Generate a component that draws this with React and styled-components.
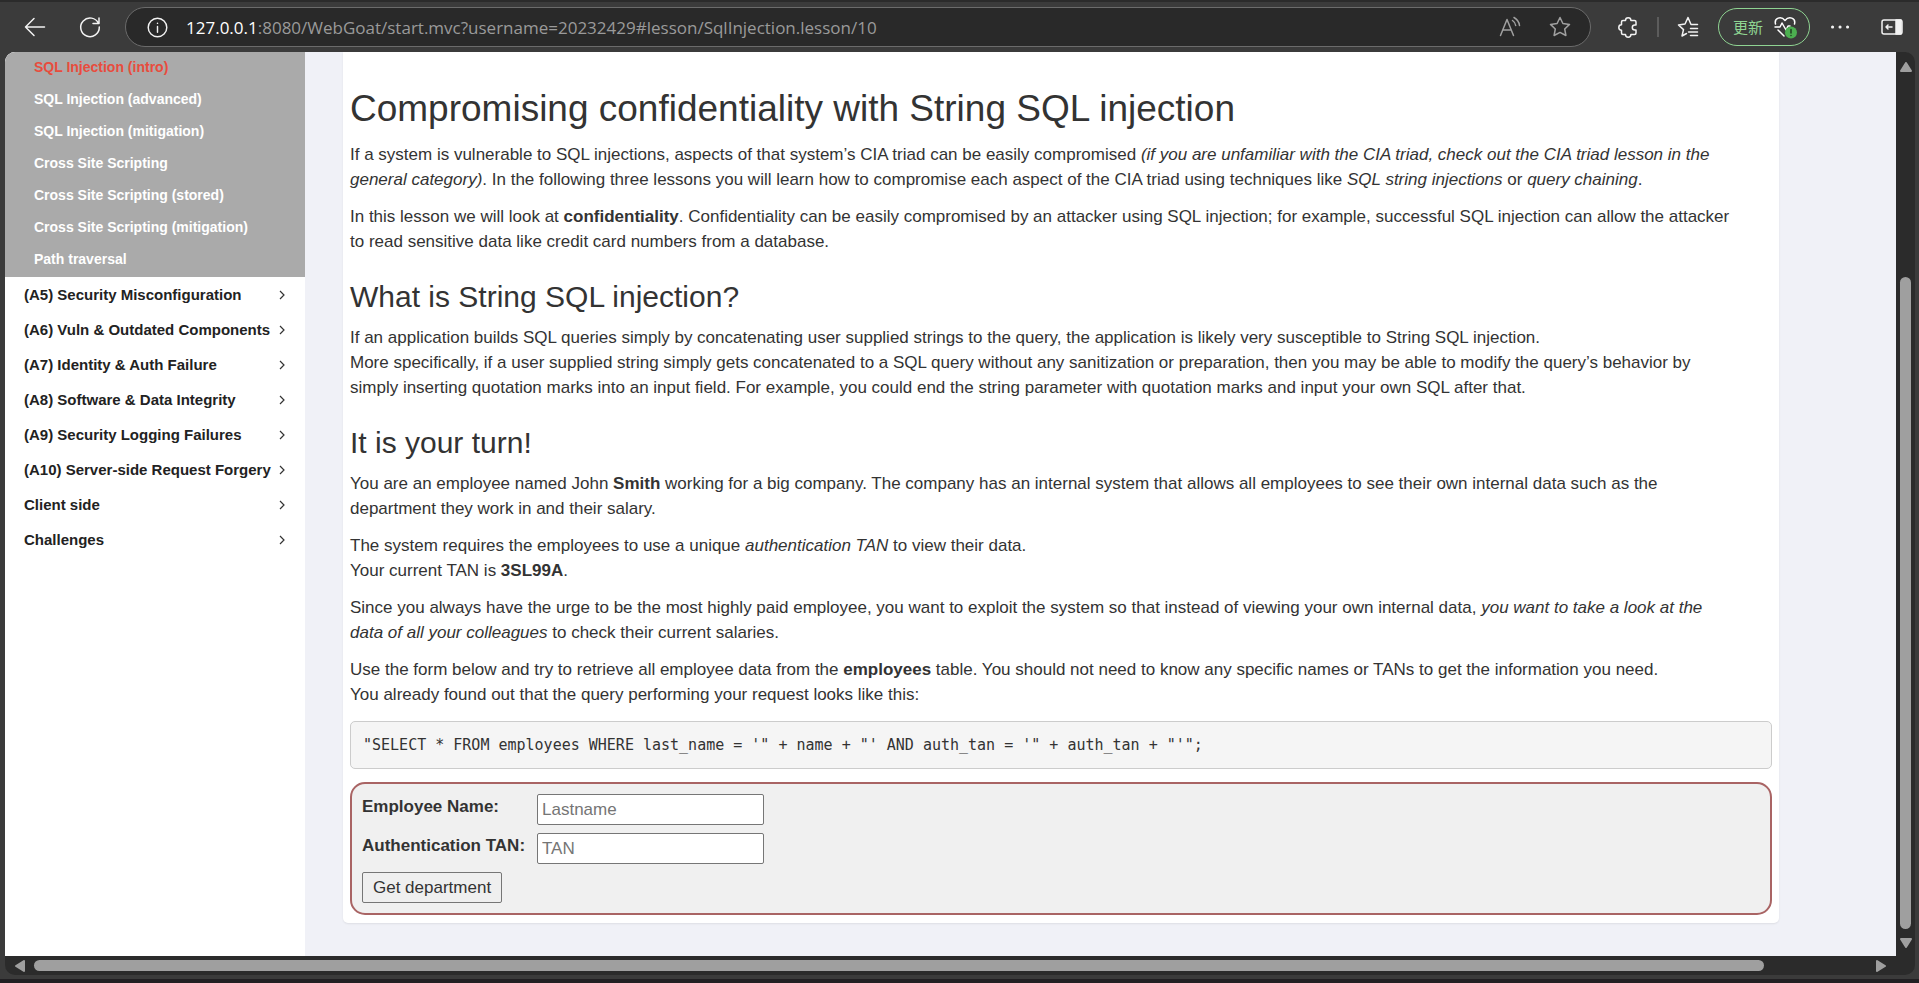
import React from "react";
import styled, { createGlobalStyle } from "styled-components";

const GlobalStyle = createGlobalStyle`
  * {
    box-sizing: border-box;
  }
  body {
    margin: 0;
    background: #3b3b3b;
  }
`;

const Browser = styled.div`
  display: flex;
  flex-direction: column;
  height: 100vh;
  border-top: 2px solid #2b2b2b;
  border-bottom: 4px solid #211f22;
  background: #3b3b3b;
`;

const Toolbar = styled.header`
  display: flex;
  align-items: center;
  height: 50px;
  padding: 0 8px 0 16px;
  color: #f2f2f2;
`;

const IconButton = styled.button`
  display: flex;
  align-items: center;
  justify-content: center;
  flex: none;
  width: ${(props) => props.$width || 38}px;
  height: 36px;
  padding: 0;
  border: 0;
  background: none;
  color: ${(props) => (props.$muted ? "#a0a0a0" : "#f2f2f2")};
`;

const AddressBar = styled.div`
  display: flex;
  align-items: center;
  flex: 1;
  height: 40px;
  margin: 0 18px 0 16px;
  padding: 0 5px 0 12px;
  border: 1px solid #6b6b6b;
  border-radius: 20px;
  background: #292929;
`;

const Url = styled.div`
  flex: 1;
  margin-left: 10px;
  color: #9a9a9a;
  font: 17px "Open Sans", sans-serif;
  white-space: nowrap;

  span {
    color: #ffffff;
  }
`;

const Divider = styled.div`
  width: 2px;
  height: 20px;
  margin: 0 10px;
  background: #5c5c5c;
`;

const UpdateButton = styled.button`
  display: flex;
  align-items: center;
  gap: 10px;
  height: 38px;
  margin: 0 11px;
  padding: 0 12px 0 14px;
  border: 1px solid #8fd492;
  border-radius: 19px;
  background: none;
  color: #8fd492;
  font: 15px/20px "Noto Sans CJK SC", sans-serif;
`;

const Viewport = styled.div`
  display: grid;
  grid-template-columns: 1fr 19px;
  grid-template-rows: 1fr 19px;
  flex: 1;
  min-height: 0;
  margin: 0 4px 4px 5px;
  border-radius: 10px;
  overflow: hidden;
  background: #2b2b2b;
`;

const Page = styled.div`
  display: flex;
  min-height: 0;
  overflow: hidden;
  background: #f0f1f7;
  font-family: "Liberation Sans", Arial, sans-serif;
`;

const Track = styled.div`
  display: flex;
  flex-direction: ${(props) => (props.$vertical ? "column" : "row")};
  align-items: center;
  padding: ${(props) => (props.$vertical ? "10px 0 8px" : "0 10px")};
  gap: 9px;
`;

const Spacer = styled.div`
  flex: ${(props) => props.$flex};
`;

const Thumb = styled.div`
  flex: ${(props) => props.$flex};
  align-self: stretch;
  margin: ${(props) => (props.$vertical ? "0 4px" : "4px 0")};
  border-radius: 6px;
  background: #9f9f9f;
`;

const Sidebar = styled.nav`
  flex: none;
  width: 300px;
  background: #ffffff;
`;

const List = styled.ul`
  margin: 0;
  padding: 0;
  list-style: none;
`;

const Lessons = styled(List)`
  padding-bottom: 1px;
  background: #aaaaaa;
`;

const LessonLink = styled.a`
  display: block;
  height: 32px;
  padding-left: 29px;
  color: ${(props) => (props.$active ? "#e84c3d" : "#ffffff")};
  font-size: 14px;
  font-weight: bold;
  line-height: 30px;
  text-decoration: none;
`;

const CategoryLink = styled.a`
  display: flex;
  align-items: center;
  justify-content: space-between;
  height: 35px;
  padding: 0 19px;
  color: #222222;
  font-size: 15px;
  font-weight: bold;
  text-decoration: none;
`;

const Main = styled.main`
  flex: 1;
  padding: 0 117px 0 38px;
`;

const Card = styled.section`
  padding: 36px 7px 8px;
  border-radius: 0 0 5px 5px;
  background: #ffffff;
  box-shadow: 0 1px 2px rgba(0, 0, 0, 0.08);
  color: #333333;
  font-size: 17px;
  line-height: 25px;
`;

const Title = styled.h1`
  margin: 0 0 12px;
  font-size: 37px;
  font-weight: normal;
  line-height: 42px;
`;

const Heading = styled.h2`
  margin: 26px 0 11px;
  font-size: 30px;
  font-weight: normal;
  line-height: 34px;
`;

const Text = styled.p`
  margin: 0 0 12px;
  white-space: nowrap;
`;

const Code = styled.pre`
  margin: 14px 0 13px;
  padding: 11px 12px;
  border: 1px solid #cccccc;
  border-radius: 5px;
  background: #f5f5f5;
  font: 15px/24px "DejaVu Sans Mono", monospace;
`;

const Attack = styled.form`
  padding: 10px;
  border: 2px solid #a96464;
  border-radius: 15px;
  background: #f0f0f0;
`;

const Fields = styled.div`
  display: grid;
  grid-template-columns: 167px 227px;
  gap: 8px;
  margin-bottom: 8px;
`;

const Label = styled.label`
  font-weight: bold;
`;

const Input = styled.input`
  width: 100%;
  height: 31px;
  padding: 1px 4px;
  border: 1px solid #767676;
  border-radius: 2px;
  background: #ffffff;
  font: 17px "Liberation Sans", Arial, sans-serif;

  &::placeholder {
    color: #757575;
  }
`;

const Submit = styled.button`
  display: block;
  height: 31px;
  padding: 0 10px;
  border: 1px solid #767676;
  border-radius: 2px;
  background: #efefef;
  color: #333333;
  font: 17px "Liberation Sans", Arial, sans-serif;
`;

const lessons = [
  "SQL Injection (intro)",
  "SQL Injection (advanced)",
  "SQL Injection (mitigation)",
  "Cross Site Scripting",
  "Cross Site Scripting (stored)",
  "Cross Site Scripting (mitigation)",
  "Path traversal",
];

const categories = [
  "(A5) Security Misconfiguration",
  "(A6) Vuln & Outdated Components",
  "(A7) Identity & Auth Failure",
  "(A8) Software & Data Integrity",
  "(A9) Security Logging Failures",
  "(A10) Server-side Request Forgery",
  "Client side",
  "Challenges",
];

const Icon = ({ size = 24, children }) => (
  <svg
    width={size}
    height={size}
    viewBox="0 0 24 24"
    fill="none"
    stroke="currentColor"
    strokeWidth="1.5"
    strokeLinecap="round"
    strokeLinejoin="round"
    aria-hidden="true"
  >
    {children}
  </svg>
);

const Arrow = ({ points, width = 12, height = 10 }) => (
  <svg width={width} height={height} viewBox={`0 0 ${width} ${height}`} aria-hidden="true">
    <polygon points={points} fill="#9f9f9f" stroke="#9f9f9f" strokeWidth="2" strokeLinejoin="round" />
  </svg>
);

const BrowserBar = () => (
  <Toolbar>
    <IconButton aria-label="Back">
      <Icon>
        <path d="M21.5 12H2.5M11 3.5 2.5 12l8.5 8.5" />
      </Icon>
    </IconButton>
    <Spacer $flex="0 0 17px" />
    <IconButton aria-label="Refresh">
      <Icon>
        <path d="M20.5 8.5A9.3 9.3 0 1 0 21.3 12M21 3v5.5h-6" />
      </Icon>
    </IconButton>
    <AddressBar>
      <IconButton aria-label="Site information">
        <Icon size={23}>
          <circle cx="12" cy="12" r="9.7" />
          <path d="M12 11v6M12 7.5v.2" />
        </Icon>
      </IconButton>
      <Url>
        <span>127.0.0.1</span>:8080/WebGoat/start.mvc?username=20232429#lesson/SqlInjection.lesson/10
      </Url>
      <IconButton $muted $width={50} aria-label="Read aloud">
        <Icon>
          <path d="M2.5 20.5 9 4.5l6.5 16M5 15h8M14.5 5.5q3 2 3.2 5M16 2.5q5 3 5.5 8" />
        </Icon>
      </IconButton>
      <IconButton $muted $width={50} aria-label="Favorite">
        <Icon>
          <path d="m12 2.5 2.9 6 6.6.9-4.8 4.6 1.2 6.5-5.9-3.1-5.9 3.1L7.3 14 2.500 9.4l6.6-.9z" />
        </Icon>
      </IconButton>
    </AddressBar>
    <IconButton aria-label="Extensions">
      <Icon>
        <path d="M7 5.5h2.5a2.7 2.7 0 0 1 5.4 0h3.600a1.5 1.5 0 0 1 1.5 1.5v3h-1.2a2.5 2.5 0 0 0 0 5H20v3a1.5 1.5 0 0 1-1.5 1.5h-3.600a2.7 2.7 0 0 1-5.4 0H7A1.5 1.5 0 0 1 5.5 18v-2.800a2.7 2.7 0 0 1 0-5.4V7A1.5 1.5 0 0 1 7 5.5z" />
      </Icon>
    </IconButton>
    <Divider />
    <IconButton aria-label="Favorites list">
      <Icon>
        <path d="M21.5 9.5H15l-3-7L9 9l-6.5 1 5 4.6L6 21l4.5-2.5M14.5 13.5h7M12.5 17h9M14.5 20.5h7" />
      </Icon>
    </IconButton>
    <UpdateButton>
      更新
      <Icon>
        <path d="M2.5 9C1 3 8 .5 12 5.5 16 .5 23 3 21.5 9M2 12h5l2-4 4 7 2-4h2M5 15l6 6" stroke="#fff" />
        <circle cx="18" cy="17.5" r="6" fill="#4caf50" stroke="none" />
        <path d="M18 14.5V18M18 20.5v.1" stroke="#1f3d20" />
      </Icon>
    </UpdateButton>
    <IconButton aria-label="Settings and more">
      <Icon>
        <path d="M4.500 12h.1M12 12h.1M19.500 12h.1" strokeWidth="3" />
      </Icon>
    </IconButton>
    <Spacer $flex="0 0 14px" />
    <IconButton aria-label="Sidebar">
      <Icon>
        <rect x="2" y="5" width="20" height="14" rx="2" />
        <path d="M16 5h5v14h-5z" fill="currentColor" />
        <path d="M12 12H6M8 10l-2 2 2 2" />
      </Icon>
    </IconButton>
  </Toolbar>
);

const Menu = () => (
  <Sidebar>
    <Lessons>
      {lessons.map((name, i) => (
        <li key={name}>
          <LessonLink href="#lesson" $active={i === 0}>
            {name}
          </LessonLink>
        </li>
      ))}
    </Lessons>
    <List>
      {categories.map((name) => (
        <li key={name}>
          <CategoryLink href="#category">
            {name}
            <svg width="8" height="12" viewBox="0 0 8 12" fill="none" stroke="#333" aria-hidden="true">
              <path d="M2 2l4 4-4 4" strokeWidth="1.2" />
            </svg>
          </CategoryLink>
        </li>
      ))}
    </List>
  </Sidebar>
);

const Lesson = () => (
  <Card>
    <Title>Compromising confidentiality with String SQL injection</Title>
    <Text>
      If a system is vulnerable to SQL injections, aspects of that system’s CIA triad can be easily compromised{" "}
      <em>
        (if you are unfamiliar with the CIA triad, check out the CIA triad lesson in the
        <br />
        general category)
      </em>
      . In the following three lessons you will learn how to compromise each aspect of the CIA triad using techniques
      like <em>SQL string injections</em> or <em>query chaining</em>.
    </Text>
    <Text>
      In this lesson we will look at <strong>confidentiality</strong>. Confidentiality can be easily compromised by an
      attacker using SQL injection; for example, successful SQL injection can allow the attacker
      <br />
      to read sensitive data like credit card numbers from a database.
    </Text>
    <Heading>What is String SQL injection?</Heading>
    <Text>
      If an application builds SQL queries simply by concatenating user supplied strings to the query, the application
      is likely very susceptible to String SQL injection.
      <br />
      More specifically, if a user supplied string simply gets concatenated to a SQL query without any sanitization or
      preparation, then you may be able to modify the query’s behavior by
      <br />
      simply inserting quotation marks into an input field. For example, you could end the string parameter with
      quotation marks and input your own SQL after that.
    </Text>
    <Heading>It is your turn!</Heading>
    <Text>
      You are an employee named John <strong>Smith</strong> working for a big company. The company has an internal
      system that allows all employees to see their own internal data such as the
      <br />
      department they work in and their salary.
    </Text>
    <Text>
      The system requires the employees to use a unique <em>authentication TAN</em> to view their data.
      <br />
      Your current TAN is <strong>3SL99A</strong>.
    </Text>
    <Text>
      Since you always have the urge to be the most highly paid employee, you want to exploit the system so that instead
      of viewing your own internal data,{" "}
      <em>
        you want to take a look at the
        <br />
        data of all your colleagues
      </em>{" "}
      to check their current salaries.
    </Text>
    <Text>
      Use the form below and try to retrieve all employee data from the <strong>employees</strong> table. You should not
      need to know any specific names or TANs to get the information you need.
      <br />
      You already found out that the query performing your request looks like this:
    </Text>
    <Code>{`"SELECT * FROM employees WHERE last_name = '" + name + "' AND auth_tan = '" + auth_tan + "'";`}</Code>
    <Attack onSubmit={(e) => e.preventDefault()}>
      <Fields>
        <Label htmlFor="name">Employee Name:</Label>
        <Input id="name" type="text" placeholder="Lastname" />
        <Label htmlFor="tan">Authentication TAN:</Label>
        <Input id="tan" type="text" placeholder="TAN" />
      </Fields>
      <Submit type="submit">Get department</Submit>
    </Attack>
  </Card>
);

const App = () => (
  <>
    <GlobalStyle />
    <Browser>
      <BrowserBar />
      <Viewport>
        <Page>
          <Menu />
          <Main>
            <Lesson />
          </Main>
        </Page>
        <Track $vertical>
          <Arrow points="6,1 11,9 1,9" />
          <Spacer $flex="187 0 0" />
          <Thumb $vertical $flex="652 0 0" />
          <Arrow points="1,1 11,1 6,9" />
        </Track>
        <Track>
          <Arrow width={10} height={12} points="1,6 9,1 9,11" />
          <Thumb $flex="1730 0 0" />
          <Spacer $flex="94 0 0" />
          <Arrow width={10} height={12} points="1,1 9,6 1,11" />
        </Track>
      </Viewport>
    </Browser>
  </>
);

export default App;
